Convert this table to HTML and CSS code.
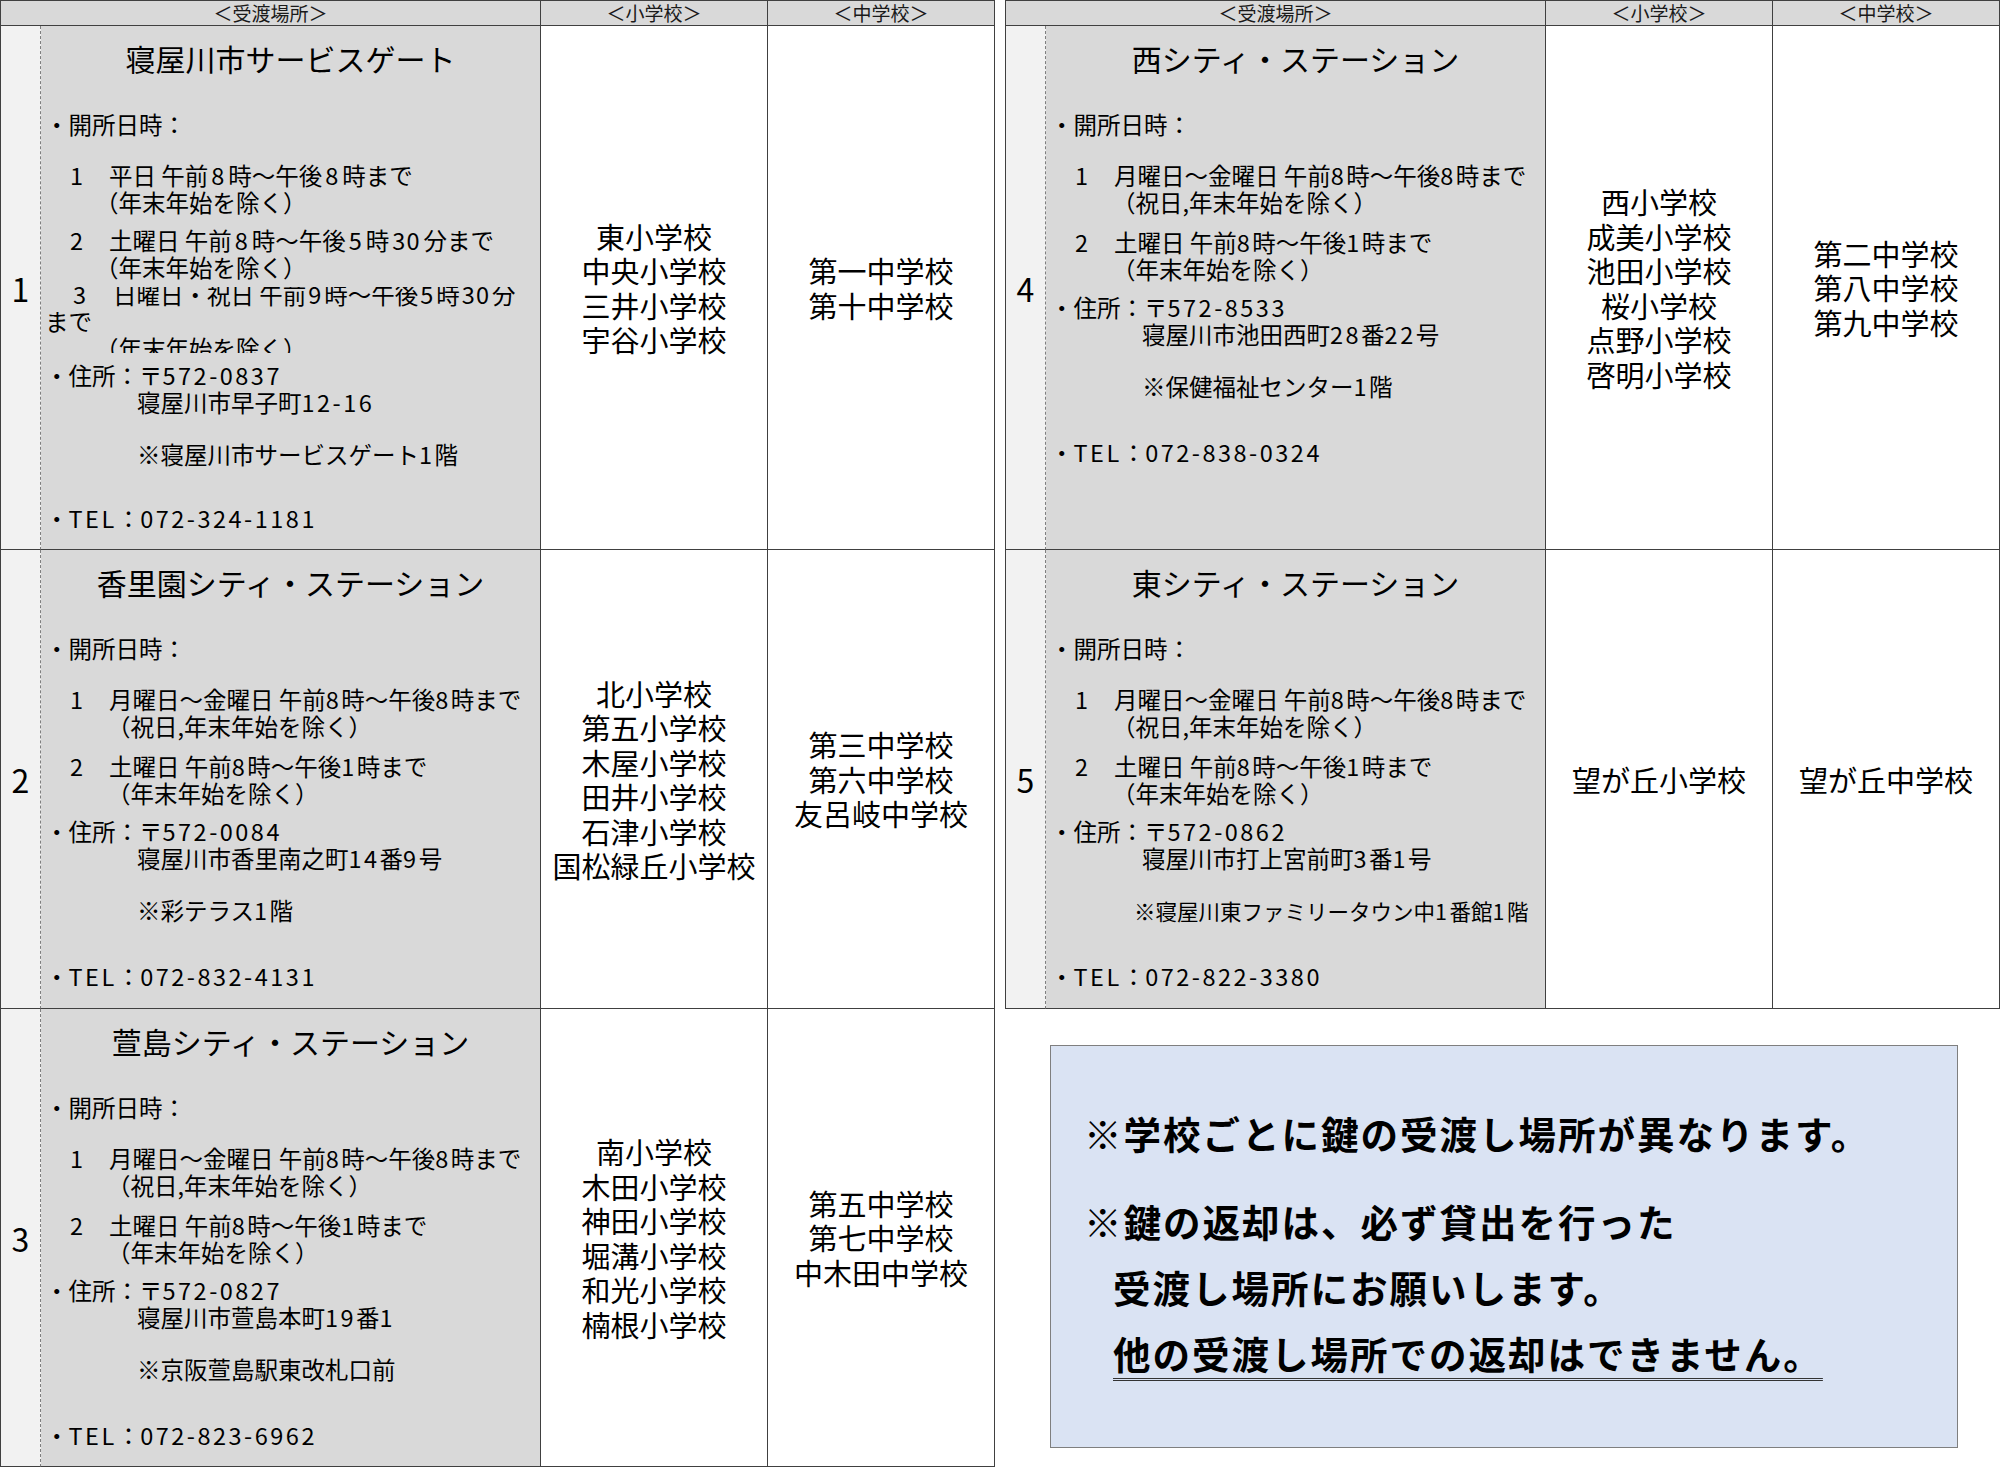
FILE: index.html
```html
<!DOCTYPE html>
<html lang="ja">
<head>
<meta charset="utf-8">
<title>鍵の受渡場所</title>
<link rel="stylesheet" href="styles.css">
</head>
<body>
<div class="page">
  <div class="table left">
    <div class="hd hd-place">＜受渡場所＞</div>
    <div class="hd">＜小学校＞</div>
    <div class="hd">＜中学校＞</div>

    <div class="no">1</div>
    <div class="place">
      <div class="title">寝屋川市サービスゲート</div>
      <div class="label">・開所日時：</div>
      <div class="item"><span class="num">1</span>平日 午前<span class="dw">8</span>時～午後<span class="dw">8</span>時まで</div>
      <div class="cont r1">（年末年始を除く）</div>
      <div class="item gap r1g"><span class="num">2</span>土曜日 午前<span class="dw">8</span>時～午後<span class="dw">5</span>時<span class="dw">30</span>分まで</div>
      <div class="cont r1">（年末年始を除く）</div>
      <div class="item clip-top"><span class="num n3">3</span>日曜日・祝日 午前<span class="dw3">9</span>時～午後<span class="dw3">5</span>時<span class="dw3">30</span>分</div>
      <div class="wrapline">まで</div>
      <div class="cont r1 clip-bottom">（年末年始を除く）</div>
      <div class="label addr0">・住所：〒<span class="d">572-0837</span></div>
      <div class="sub">寝屋川市早子町<span class="d">12-16</span></div>
      <div class="sub memo">※寝屋川市サービスゲート<span class="d">1</span>階</div>
      <div class="label tel tel1">・<span class="d">TEL</span>：<span class="d">072-324-1181</span></div>
    </div>
    <div class="schools"><div>東小学校</div><div>中央小学校</div><div>三井小学校</div><div>宇谷小学校</div></div>
    <div class="schools"><div>第一中学校</div><div>第十中学校</div></div>

    <div class="no">2</div>
    <div class="place">
      <div class="title">香里園シティ・ステーション</div>
      <div class="label">・開所日時：</div>
      <div class="item"><span class="num">1</span>月曜日～金曜日 午前<span class="d">8</span>時～午後<span class="d">8</span>時まで</div>
      <div class="cont">（祝日,年末年始を除く）</div>
      <div class="item gap"><span class="num">2</span>土曜日 午前<span class="d">8</span>時～午後<span class="d">1</span>時まで</div>
      <div class="cont">（年末年始を除く）</div>
      <div class="label addr">・住所：〒<span class="d">572-0084</span></div>
      <div class="sub">寝屋川市香里南之町<span class="d">14</span>番<span class="d">9</span>号</div>
      <div class="sub memo">※彩テラス<span class="d">1</span>階</div>
      <div class="label tel">・<span class="d">TEL</span>：<span class="d">072-832-4131</span></div>
    </div>
    <div class="schools"><div>北小学校</div><div>第五小学校</div><div>木屋小学校</div><div>田井小学校</div><div>石津小学校</div><div>国松緑丘小学校</div></div>
    <div class="schools"><div>第三中学校</div><div>第六中学校</div><div>友呂岐中学校</div></div>

    <div class="no">3</div>
    <div class="place">
      <div class="title">萱島シティ・ステーション</div>
      <div class="label">・開所日時：</div>
      <div class="item"><span class="num">1</span>月曜日～金曜日 午前<span class="d">8</span>時～午後<span class="d">8</span>時まで</div>
      <div class="cont">（祝日,年末年始を除く）</div>
      <div class="item gap"><span class="num">2</span>土曜日 午前<span class="d">8</span>時～午後<span class="d">1</span>時まで</div>
      <div class="cont">（年末年始を除く）</div>
      <div class="label addr">・住所：〒<span class="d">572-0827</span></div>
      <div class="sub">寝屋川市萱島本町<span class="d">19</span>番<span class="d">1</span></div>
      <div class="sub memo">※京阪萱島駅東改札口前</div>
      <div class="label tel">・<span class="d">TEL</span>：<span class="d">072-823-6962</span></div>
    </div>
    <div class="schools"><div>南小学校</div><div>木田小学校</div><div>神田小学校</div><div>堀溝小学校</div><div>和光小学校</div><div>楠根小学校</div></div>
    <div class="schools"><div>第五中学校</div><div>第七中学校</div><div>中木田中学校</div></div>
  </div>

  <div class="rightcol">
    <div class="table right">
      <div class="hd hd-place">＜受渡場所＞</div>
      <div class="hd">＜小学校＞</div>
      <div class="hd">＜中学校＞</div>

      <div class="no">4</div>
      <div class="place">
        <div class="title">西シティ・ステーション</div>
        <div class="label">・開所日時：</div>
        <div class="item"><span class="num">1</span>月曜日～金曜日 午前<span class="d">8</span>時～午後<span class="d">8</span>時まで</div>
        <div class="cont">（祝日,年末年始を除く）</div>
        <div class="item gap"><span class="num">2</span>土曜日 午前<span class="d">8</span>時～午後<span class="d">1</span>時まで</div>
        <div class="cont">（年末年始を除く）</div>
        <div class="label addr">・住所：〒<span class="d">572-8533</span></div>
        <div class="sub">寝屋川市池田西町<span class="d">28</span>番<span class="d">22</span>号</div>
        <div class="sub memo">※保健福祉センター<span class="d">1</span>階</div>
        <div class="label tel">・<span class="d">TEL</span>：<span class="d">072-838-0324</span></div>
      </div>
      <div class="schools"><div>西小学校</div><div>成美小学校</div><div>池田小学校</div><div>桜小学校</div><div>点野小学校</div><div>啓明小学校</div></div>
      <div class="schools"><div>第二中学校</div><div>第八中学校</div><div>第九中学校</div></div>

      <div class="no">5</div>
      <div class="place">
        <div class="title">東シティ・ステーション</div>
        <div class="label">・開所日時：</div>
        <div class="item"><span class="num">1</span>月曜日～金曜日 午前<span class="d">8</span>時～午後<span class="d">8</span>時まで</div>
        <div class="cont">（祝日,年末年始を除く）</div>
        <div class="item gap"><span class="num">2</span>土曜日 午前<span class="d">8</span>時～午後<span class="d">1</span>時まで</div>
        <div class="cont">（年末年始を除く）</div>
        <div class="label addr">・住所：〒<span class="d">572-0862</span></div>
        <div class="sub">寝屋川市打上宮前町<span class="d">3</span>番<span class="d">1</span>号</div>
        <div class="sub memo small">※寝屋川東ファミリータウン中<span class="d">1</span>番館<span class="d">1</span>階</div>
        <div class="label tel">・<span class="d">TEL</span>：<span class="d">072-822-3380</span></div>
      </div>
      <div class="schools"><div>望が丘小学校</div></div>
      <div class="schools"><div>望が丘中学校</div></div>
    </div>

    <div class="notice">
      <div class="nl first">※学校ごとに鍵の受渡し場所が異なります。</div>
      <div class="nl">※鍵の返却は、必ず貸出を行った</div>
      <div class="nl ind">受渡し場所にお願いします。</div>
      <div class="nl ind"><span class="ul">他の受渡し場所での返却はできません。</span></div>
    </div>
  </div>
</div>
</body>
</html>
```

FILE: styles.css
```css
* {
  box-sizing: border-box;
}

body {
  margin: 0;
  background: #ffffff;
  color: #000000;
  font-family: "Noto Sans CJK JP", sans-serif;
}

.page {
  display: flex;
  gap: 10px;
  width: 2000px;
}

.table {
  width: 995px;
  display: grid;
  grid-template-columns: 40px 500px 227px 227px;
  border-left: 1px solid #404040;
  border-top: 1px solid #404040;
}

.table.left {
  grid-template-rows: 25px 524px 459px 458px;
}

.table.right {
  grid-template-rows: 25px 524px 459px;
}

.table > div {
  border-right: 1px solid #404040;
  border-bottom: 1px solid #404040;
}

.hd {
  background: #d9d9d9;
  font-size: 19px;
  line-height: 24px;
  text-align: center;
  color: #1a1a1a;
}

.hd-place {
  grid-column: span 2;
}

.table > .no {
  background: #f2f2f2;
  border-right: 1px dashed #7f7f7f;
  display: flex;
  align-items: center;
  justify-content: center;
  font-size: 32px;
}

.place {
  background: #d9d9d9;
  padding: 12px 0 0 4px;
  font-size: 23.5px;
  line-height: 27px;
  white-space: nowrap;
  overflow: hidden;
}

.title {
  font-size: 30px;
  line-height: 40px;
  text-align: center;
  padding-right: 4px;
  margin-bottom: 33px;
}

.item {
  padding-left: 25px;
  margin-top: 24px;
}

.item.gap {
  margin-top: 13px;
}

.item.r1g {
  margin-top: 11px;
}

.num {
  display: inline-block;
  width: 39px;
}

.cont {
  padding-left: 62px;
}

.cont.r1 {
  padding-left: 50px;
}

.clip-top {
  margin-top: 0;
  clip-path: inset(6px 0 0 0);
}

.n3 {
  width: 43px;
  padding-left: 3px;
}

.clip-bottom {
  clip-path: inset(0 0 9px 0);
}

.label.addr {
  margin-top: 11px;
}

.label.addr0 {
  margin-top: 0;
}

.sub {
  padding-left: 92px;
}

.sub.memo {
  margin-top: 25px;
}

.sub.memo.small {
  font-size: 21.5px;
  padding-left: 84px;
}

.label.tel {
  margin-top: 39px;
}

.label.tel1 {
  margin-top: 37px;
}

.d {
  letter-spacing: 2.5px;
}

.dw {
  padding: 0 3px;
  letter-spacing: 1px;
}

.dw3 {
  padding: 0 2px;
  letter-spacing: 1px;
}

.schools {
  display: flex;
  flex-direction: column;
  justify-content: center;
  align-items: center;
  font-size: 29px;
  line-height: 34.5px;
}

.rightcol {
  display: flex;
  flex-direction: column;
  align-items: flex-start;
}

.notice {
  margin: 36px 0 0 45px;
  width: 908px;
  height: 403px;
  border: 1px solid #7f7f7f;
  background: #dae3f3;
  padding: 54px 0 0 33px;
  font-size: 37.5px;
  font-weight: 700;
  letter-spacing: 2px;
  white-space: nowrap;
}

.nl {
  line-height: 66px;
}

.nl.first {
  margin-bottom: 22px;
}

.nl.ind {
  padding-left: 29px;
}

.ul {
  text-decoration: underline double #333333;
  text-decoration-thickness: 1px;
  text-underline-offset: 9px;
}
```
